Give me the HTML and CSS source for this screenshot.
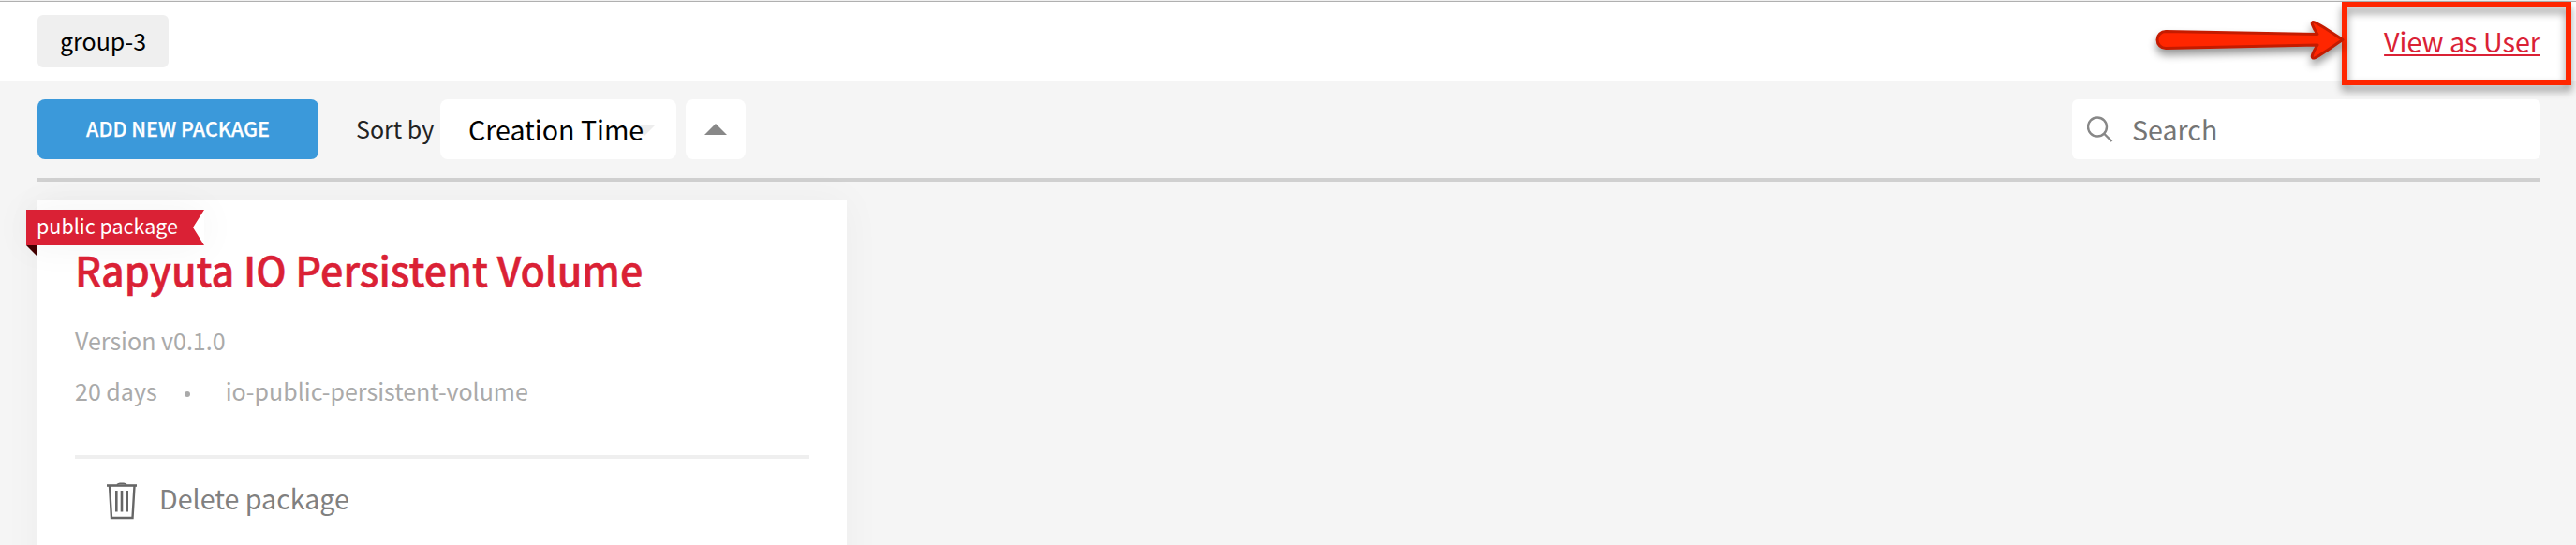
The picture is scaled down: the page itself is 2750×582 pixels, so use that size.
FILE: index.html
```html
<!DOCTYPE html>
<html lang="en">
<head>
<meta charset="utf-8">
<title>Packages</title>
<link rel="stylesheet" href="styles.css">
</head>
<body>
<header class="topbar">
  <span class="group">group-3</span>
  <a class="view-link" href="#">View as User</a>
</header>
<main class="page">
  <div class="toolbar">
    <button class="add" type="button">ADD NEW PACKAGE</button>
    <span class="sort-label">Sort by</span>
    <div class="select">
      <svg class="caret" width="24" height="12" viewBox="0 0 24 12"><path d="M0 0H24L12 12Z" fill="#ededed"/></svg>
      <span class="select-value">Creation Time</span>
    </div>
    <button class="direction" type="button" aria-label="Sort direction">
      <svg width="24" height="12" viewBox="0 0 24 12"><path d="M12 0L24 12H0Z" fill="#888"/></svg>
    </button>
    <div class="search">
      <svg width="28" height="28" viewBox="0 0 28 28" fill="none" stroke="#888" stroke-width="2.4"><circle cx="11" cy="11.500" r="10"/><path d="M18 18.500L26.500 27"/></svg>
      <span>Search</span>
    </div>
  </div>
  <section class="card">
    <div class="ribbon">
      <svg class="ribbon-shape" width="190" height="50" viewBox="0 0 190 50"><path d="M0 0H190L178 19L190 38H0Z" fill="#da2135"/><path d="M0 38H12V50Z" fill="#430000"/></svg>
      <span class="ribbon-text">public package</span>
    </div>
    <h2 class="title">Rapyuta IO Persistent Volume</h2>
    <p class="version">Version v0.1.0</p>
    <p class="meta"><span>20 days</span><i class="dot"></i><span>io-public-persistent-volume</span></p>
    <div class="actions">
      <svg width="32" height="40" viewBox="0 0 32 40" fill="none" stroke="#666"><path d="M0 3.500H32" stroke-width="2.600"/><path d="M11 2.600Q12.500 1.200 14 1.200H18Q19.500 1.200 21 2.600" stroke-width="1.600"/><path d="M3 4L5 38H27.500L29.500 4" stroke-width="2.400"/><path d="M10.300 9V31.500M16 9V31.500M21.700 9V31.500" stroke-width="2.600"/></svg>
      <span>Delete package</span>
    </div>
  </section>
</main>
<div class="highlight"></div>
<svg class="arrow" width="220" height="80" viewBox="0 0 220 80">
  <path d="M22 33.500L184 36.500C179 29 177 24 179 23.500C181 22.500 195 32 211 42.500C195 53 181 63.500 179 62C177 61 179 56 184 48L22 51.500A9 9 0 0 1 22 33.500Z" fill="#ff2600" stroke="#c41b00" stroke-width="3" stroke-linejoin="round"/>
</svg>
</body>
</html>
```
FILE: styles.css
```css
* {
  box-sizing: border-box;
}

body {
  margin: 0;
  position: relative;
  width: 2750px;
  height: 582px;
  overflow: hidden;
  background: #f5f5f5;
  color: #000;
  font-family: "Noto Sans CJK SC", "Noto Sans", sans-serif;
  font-size: 25px;
}

svg {
  display: block;
  flex: none;
}

button {
  border: 0;
  font-family: inherit;
}

.topbar {
  display: flex;
  justify-content: space-between;
  align-items: flex-start;
  height: 86px;
  padding: 14px 38px 0 40px;
  border-top: 1px solid #f0f0f0;
  background: #fff;
  box-shadow: inset 0 1px #b0b0b0;
}

.group {
  width: 140px;
  height: 56px;
  margin-top: 1px;
  padding-left: 24px;
  border-radius: 6px;
  background: #efefef;
  line-height: 54px;
}

.view-link {
  margin-top: 1px;
  color: #da2135;
  font-size: 28.7px;
  line-height: 55px;
  text-decoration: underline;
  text-decoration-thickness: 2px;
  text-underline-offset: 2px;
  text-decoration-skip-ink: none;
}

.page {
  padding: 20px 38px 0 40px;
}

.toolbar {
  display: flex;
  height: 88px;
  border-bottom: 4px solid #d0d0d0;
}

.add {
  width: 300px;
  height: 64px;
  padding: 0 0 3px;
  border-radius: 8px;
  background: #3b99da;
  color: #fff;
  font-size: 21.5px;
  font-weight: 500;
  line-height: 61px;
  -webkit-text-stroke: 0.25px #fff;
}

.sort-label {
  width: 130px;
  padding-left: 40px;
  color: #222;
  line-height: 62px;
}

.select {
  position: relative;
  width: 252px;
  height: 64px;
  padding-left: 30px;
  border-radius: 8px;
  background: #fff;
  font-size: 28.6px;
  line-height: 63px;
}

.select-value {
  position: relative;
}

.caret {
  position: absolute;
  top: 27px;
  right: 22px;
}

.direction {
  display: flex;
  align-items: center;
  justify-content: center;
  width: 64px;
  height: 64px;
  margin-left: 10px;
  border-radius: 8px;
  background: #fff;
}

.search {
  display: flex;
  gap: 20px;
  width: 500px;
  height: 64px;
  margin-left: auto;
  padding-left: 16px;
  border-radius: 6px;
  background: #fff;
  color: #757575;
  font-size: 28.6px;
  line-height: 63px;
}

.search svg {
  margin-top: 18px;
}

.card {
  width: 864px;
  height: 420px;
  margin-top: 20px;
  padding: 10px 40px 0;
  background: #fff;
  box-shadow: 0 0 40px rgba(0, 0, 0, 0.04);
}

.ribbon {
  position: relative;
  width: 190px;
  height: 38px;
  margin-left: -52px;
  padding-left: 11px;
  box-shadow: 0 0 40px rgba(0, 0, 0, 0.05);
  color: #fff;
  font-size: 21.5px;
  line-height: 33px;
}

.ribbon-shape {
  position: absolute;
  top: 0;
  left: 0;
}

.ribbon-text {
  position: relative;
}

.title {
  position: relative;
  margin: -5px 0 28px;
  color: #da2135;
  font-size: 43px;
  font-weight: 500;
  line-height: 60px;
  -webkit-text-stroke: 0.5px #da2135;
}

.version,
.meta {
  margin: 0;
  color: #aaa;
  line-height: 36px;
}

.meta {
  display: flex;
  align-items: center;
  height: 36px;
  margin-top: 18px;
}

.dot {
  width: 6px;
  height: 6px;
  margin: 7px 38px 0 29px;
  border-radius: 50%;
  background: #aaa;
}

.actions {
  display: flex;
  gap: 24px;
  margin-top: 51px;
  padding: 25px 0 0 34px;
  border-top: 4px solid #efefef;
  color: #808080;
  font-size: 28.6px;
  line-height: 33px;
}

.highlight {
  position: absolute;
  top: 2px;
  left: 2500px;
  width: 245px;
  height: 89px;
  border: 6px solid #ff2600;
  filter: drop-shadow(0 6px 4px rgba(0, 0, 0, 0.4));
}

.arrow {
  position: absolute;
  top: 0;
  left: 2290px;
  filter: drop-shadow(0 6px 4px rgba(0, 0, 0, 0.4));
}
```
